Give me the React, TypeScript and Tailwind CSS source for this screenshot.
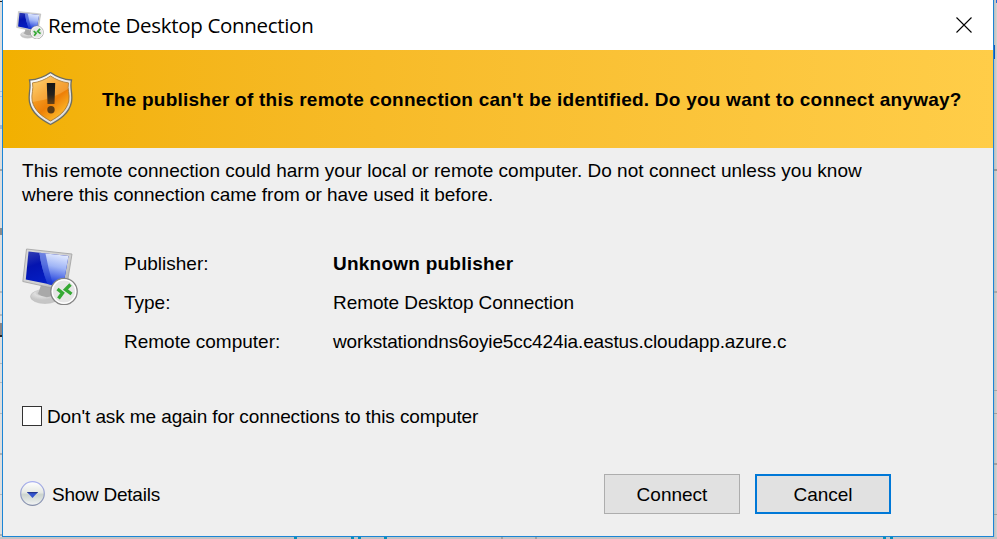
import React from "react";

const LEFT_MARKS: [number, number, string][] = [
  [1, 1, "#222222"], [91, 1, "#a9bdd6"], [96, 1, "#a9bdd6"], [125, 4, "#a5b5cb"],
  [169, 2, "#a4a4a4"], [228, 7, "#8b8b8b"], [291, 2, "#b8b8b8"], [314, 2, "#b8b8b8"],
  [323, 12, "#8d8583"], [335, 2, "#252525"], [363, 1, "#b8b8b8"], [382, 1, "#b8b8b8"],
  [413, 1, "#b8b8b8"], [453, 2, "#b0b0b0"], [494, 1, "#b8b8b8"], [534, 2, "#b0b0b0"],
];

const RIGHT_MARKS: [number, number, string][] = [
  [169, 2, "#969696"], [291, 2, "#a8a8a8"], [390, 1, "#a5a5a5"],
  [413, 1, "#a0a0a0"], [463, 2, "#a0a0a0"], [514, 1, "#a0a0a0"],
];

const BOTTOM_MARKS: [number, number, string][] = [
  [294, 3, "#078fba"], [351, 3, "#078fba"], [358, 3, "#078fba"], [384, 3, "#078fba"],
  [501, 2, "#a2a2a2"], [535, 2, "#a2a2a2"], [883, 3, "#078fba"], [890, 3, "#078fba"],
];

function Backdrop() {
  return (
    <div aria-hidden="true" className="absolute inset-0">
      <div className="absolute inset-y-0 left-0 w-[2px] bg-[#dedede]">
        {LEFT_MARKS.map(([y, h, c]) => (
          <div key={y} className="absolute left-0 w-full" style={{ top: y, height: h, background: c }} />
        ))}
      </div>
      <div className="absolute inset-y-0 right-0 w-[3px] bg-gradient-to-r from-[#bdbdbd] to-[#d4d4d4]">
        <div className="absolute top-0 right-0 h-[3px] w-px bg-[#2468d8]" />
        <div className="absolute top-[45px] left-0 h-[14px] w-px bg-[#1456b8]" />
        {RIGHT_MARKS.map(([y, h, c]) => (
          <div key={y} className="absolute left-0 w-full" style={{ top: y, height: h, background: c }} />
        ))}
      </div>
      <div className="absolute inset-x-0 bottom-0 h-[2px] bg-[#c4c4c4]">
        {BOTTOM_MARKS.map(([x, w, c]) => (
          <div key={x} className="absolute top-0 h-full" style={{ left: x, width: w, background: c }} />
        ))}
      </div>
    </div>
  );
}

function MonitorIcon({ id, className }: { id: string; className: string }) {
  return (
    <svg viewBox="0 0 56 57" className={className} aria-hidden="true">
      <defs>
        <linearGradient id={`${id}-screen`} x1="0" y1="0" x2=".4" y2="1">
          <stop offset="0" stopColor="#3440b4" />
          <stop offset=".4" stopColor="#0414b0" />
          <stop offset="1" stopColor="#0420c8" />
        </linearGradient>
        <linearGradient id={`${id}-shine`} x1=".6" y1="0" x2=".4" y2="1">
          <stop offset="0" stopColor="#e6edff" />
          <stop offset=".4" stopColor="#a0b5f6" />
          <stop offset=".9" stopColor="#1838da" />
        </linearGradient>
        <linearGradient id={`${id}-frame`} x1="0" y1="0" x2="1" y2="1">
          <stop offset="0" stopColor="#d9d9d9" />
          <stop offset=".6" stopColor="#cfcfcf" />
          <stop offset="1" stopColor="#a1a1a1" />
        </linearGradient>
        <radialGradient id={`${id}-base`} cx=".4" cy=".25">
          <stop offset="0" stopColor="#a8a8a8" />
          <stop offset=".5" stopColor="#dedede" />
          <stop offset="1" stopColor="#c6c6c6" />
        </radialGradient>
      </defs>
      <ellipse cx="23" cy="48.500" rx="14.500" ry="7" fill={`url(#${id}-base)`} stroke="#bcbcbc" strokeWidth=".6" />
      <path d="M19 37L32 40L30 48Q23 51 16 46Z" fill="#a9a9a9" />
      <path d="M4.500 1L50 6L44 43L.8 33.500Z" fill={`url(#${id}-frame)`} stroke="#a0a0a0" strokeWidth=".8" />
      <path d="M6.500 3.500L46.500 8L41 39L3.800 31.500Z" fill={`url(#${id}-screen)`} />
      <path d="M17.500 4.700L46.500 8L41 39L25.500 35.900Q19 19 17.500 4.700Z" fill={`url(#${id}-shine)`} />
      <path d="M17.500 4.700L23.500 5.400Q26 20 31 36.900L25.500 35.900Q19 19 17.500 4.700Z" fill="#1c38cc" opacity=".55" />
      <circle cx="42" cy="43.500" r="13.200" fill="#f2f2f2" stroke="#858585" strokeWidth="1.300" />
      <circle cx="42" cy="43.500" r="11.600" fill="#e6e6e6" stroke="#fff" strokeWidth="1.200" />
      <path d="M35.500 41L40.500 45L36.500 50.500M48.500 36.500L43.500 41.500L49.500 46" fill="none" stroke="#35a934" strokeWidth="3.400" />
    </svg>
  );
}

function ShieldIcon() {
  return (
    <svg viewBox="0 0 46 54" className="block h-[54px] w-[46px]" aria-hidden="true">
      <defs>
        <linearGradient id="shield" x1="0" y1="0" x2=".7" y2="1">
          <stop offset="0" stopColor="#ffd56b" />
          <stop offset=".4" stopColor="#f59a20" />
          <stop offset=".65" stopColor="#ee8008" />
          <stop offset="1" stopColor="#ffc02c" />
        </linearGradient>
        <linearGradient id="shield-rim" x1="0" y1="0" x2="1" y2="1">
          <stop offset="0" stopColor="#fff" />
          <stop offset="1" stopColor="#d5d5d5" />
        </linearGradient>
        <linearGradient id="mark" x1="0" y1="0" x2="0" y2="1">
          <stop offset="0" stopColor="#151515" />
          <stop offset=".55" stopColor="#24211d" />
          <stop offset="1" stopColor="#684217" />
        </linearGradient>
      </defs>
      <path d="M23.500 .5C29 4.500 36 7.500 44.500 8C42.500 16 46 21 44.500 30C42 42 32 48 23.500 52.500C15 48 5 42 2.500 30C1 21 4.500 16 2.500 8C11 7.500 18 4.500 23.500 .5Z" fill="url(#shield-rim)" stroke="#6d6d62" strokeWidth="1.300" />
      <path d="M23.500 4C29 7.700 35 10.200 41.500 10.900C40 17 43 22 41.800 29C39.500 39 31.500 44.700 23.500 49C15.500 44.700 7.500 39 5.200 29C4 22 7 17 5.500 10.900C12 10.200 18 7.700 23.500 4Z" fill="url(#shield)" stroke="#a8742a" strokeWidth=".9" />
      <path d="M23.500 4C18 7.700 12 10.200 5.500 10.900C7 17 4 22 5.500 30Q24 28 41 17L41.500 10.900C35 10.200 29 7.700 23.500 4Z" fill="#ffe5a3" opacity=".25" />
      <path d="M19.800 11H28.200L27.500 32H20.500Z" fill="url(#mark)" />
      <circle cx="24" cy="37.800" r="3.700" fill="#5c3b14" />
    </svg>
  );
}

function DetailsIcon() {
  return (
    <svg viewBox="0 0 26 26" className="h-[26px] w-[26px] shrink-0" aria-hidden="true">
      <defs>
        <linearGradient id="disc" x1="0" y1="0" x2="0" y2="1">
          <stop offset="0" stopColor="#fff" />
          <stop offset=".45" stopColor="#e6e9e4" />
          <stop offset=".55" stopColor="#ccd4ce" />
          <stop offset="1" stopColor="#f2f4f5" />
        </linearGradient>
        <linearGradient id="ring" x1="0" y1="0" x2="0" y2="1">
          <stop offset="0" stopColor="#a8b0f0" />
          <stop offset="1" stopColor="#858fa8" />
        </linearGradient>
      </defs>
      <circle cx="12.500" cy="12.500" r="11.800" fill="url(#disc)" stroke="url(#ring)" strokeWidth="1.200" />
      <path d="M7 11H18L12.500 17Z" fill="#3455cf" />
      <path d="M7 11H18L17 12.200H8Z" fill="#23378e" />
    </svg>
  );
}

function Row({ label, children }: { label: string; children: React.ReactNode }) {
  return (
    <div className="flex h-[39px] items-center">
      <dt className="w-[209px] shrink-0">{label}</dt>
      <dd>{children}</dd>
    </div>
  );
}

export default function App() {
  return (
    <div className="relative h-[539px] w-[997px] overflow-hidden bg-[#dedede] font-['Liberation_Sans',Arial,sans-serif] text-[19px] leading-6 whitespace-nowrap text-black">
      <Backdrop />
      <main className="relative ml-[2px] flex h-[537px] w-[992px] flex-col border-x border-b border-[#1b85d6] bg-[#efefef]">
        <header className="flex h-[50px] shrink-0 items-center bg-white pr-[21px] pl-[13px]">
          <MonitorIcon id="small" className="mt-[-1px] h-[28px] w-[28px]" />
          <h1 className="ml-1 flex-1 font-['Open_Sans','Noto_Sans',sans-serif] text-[20.5px] tracking-[-0.31px]">Remote Desktop Connection</h1>
          <button aria-label="Close" className="-mt-px block">
            <svg viewBox="0 0 16 16" className="h-4 w-4"><path d="M.5 .5L15.500 15.500M15.500 .5L.5 15.500" stroke="#000" strokeWidth="1.100" /></svg>
          </button>
        </header>
        <section className="flex h-[98px] shrink-0 items-center bg-gradient-to-r from-[#f2b000] to-[#ffcd48] pl-6">
          <ShieldIcon />
          <h2 className="ml-[29px] pt-[2px] font-bold tracking-[0.232px]">The publisher of this remote connection can't be identified. Do you want to connect anyway?</h2>
        </section>
        <section className="flex flex-1 flex-col pt-[11px] pl-[19px]">
          <p><span className="tracking-[0.024px]">This remote connection could harm your local or remote computer. Do not connect unless you know</span><br /><span className="tracking-[-0.035px]">where this connection came from or have used it before.</span></p>
          <div className="mt-[37px] flex">
            <MonitorIcon id="large" className="mt-[4px] h-[57px] w-[56px]" />
            <dl className="ml-[46px]">
              <Row label="Publisher:"><strong className="tracking-[0.235px]">Unknown publisher</strong></Row>
              <Row label="Type:"><span className="tracking-[-0.08px]">Remote Desktop Connection</span></Row>
              <Row label="Remote computer:"><span className="tracking-[-0.12px]">workstationdns6oyie5cc424ia.eastus.cloudapp.azure.c</span></Row>
            </dl>
          </div>
          <label className="mt-[43px] flex h-6 items-center">
            <input type="checkbox" className="h-5 w-5 appearance-none border border-[#333] bg-white" />
            <span className="ml-[5px] pt-[2px] tracking-[-0.105px]">Don't ask me again for connections to this computer</span>
          </label>
          <div className="mt-[46px] flex h-10 items-center">
            <button className="-ml-[2px] flex items-center">
              <DetailsIcon />
              <span className="ml-[6px] pt-px tracking-[-0.25px]">Show Details</span>
            </button>
            <div className="mr-[102px] ml-auto flex gap-[15px]">
              <button className="h-10 w-[136px] border border-[#adadad] bg-[#e1e1e1] pt-px">Connect</button>
              <button className="h-10 w-[136px] border-2 border-[#0078d7] bg-[#e1e1e1] pt-px">Cancel</button>
            </div>
          </div>
        </section>
      </main>
    </div>
  );
}
